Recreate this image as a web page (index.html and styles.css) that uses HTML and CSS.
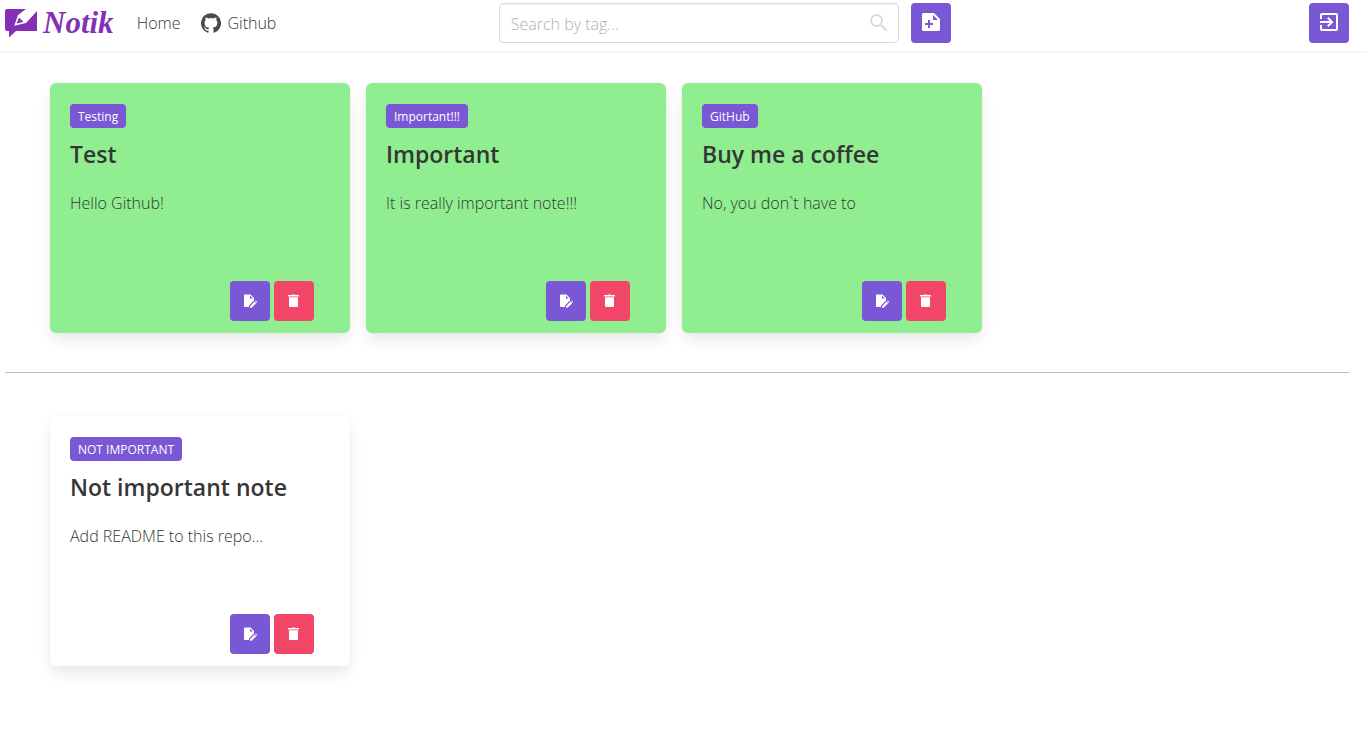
FILE: index.html
```html
<!DOCTYPE html>
<html lang="en">
<head>
<meta charset="utf-8">
<meta name="viewport" content="width=device-width, initial-scale=1">
<title>Notik</title>
<link rel="stylesheet" href="styles.css">
</head>
<body>
<svg class="sprite" aria-hidden="true">
  <symbol id="edit" viewBox="0 0 16 16"><path fill-rule="evenodd" d="M3 1.500h5.500L12 5v2.500L7 12.500V14H3a1 1 0 0 1-1-1V2.500a1 1 0 0 1 1-1zM8 2.700v2.800h2.800z"/><path d="m8 13.200 4.600-4.600 1.600 1.600-4.600 4.600H8zM13.100 8.100l.4-.4q.3-.3.6 0l1 1q.3.300 0 .6l-.4.4z"/></symbol>
  <symbol id="trash" viewBox="0 0 16 16"><path d="M2 2h3.700l.7-.5h2.200l.7.500H13v1.500H2zM3 4.300h9v8.700q0 1-1 1H4q-1 0-1-1z"/></symbol>
</svg>
<header class="navbar">
  <div class="nav-start">
    <a class="brand" href="#" aria-label="Notik">
      <svg class="brand-mark" viewBox="0 0 33 29" aria-hidden="true"><path d="M2 0h19L13 6 9.300 16.700 21 14 32 2v20H11L4 28.500V22H2q-2 0-2-2V2q0-2 2-2z"/><path d="m11.500 14.500 2.500-6 4.500 4.500z"/></svg>
      <span class="brand-name">Notik</span>
    </a>
    <nav class="links">
      <a class="link" href="#">Home</a>
      <a class="link" href="#"><svg class="github" viewBox="0 0 24 24" aria-hidden="true"><path d="M12 .3a12 12 0 0 0-3.800 23.400c.6.100.8-.3.800-.6v-2c-3.300.7-4-1.600-4-1.600-.6-1.400-1.400-1.800-1.400-1.800-1-.7.100-.7.100-.7 1.200 0 1.900 1.200 1.900 1.200 1 1.800 2.800 1.300 3.500 1 0-.8.400-1.300.7-1.600-2.700-.3-5.500-1.300-5.500-6 0-1.200.5-2.300 1.300-3.100-.2-.4-.6-1.600 0-3.200 0 0 1-.3 3.400 1.200a11.500 11.500 0 0 1 6 0c2.300-1.500 3.300-1.200 3.300-1.200.6 1.600.2 2.800 0 3.200.9.800 1.300 1.900 1.300 3.200 0 4.600-2.800 5.600-5.500 5.900.5.400.9 1 .9 2.200v3.300c0 .3.100.7.800.6A12 12 0 0 0 12 .3"/></svg>Github</a>
    </nav>
  </div>
  <div class="tools">
    <label class="search">
      <input class="search-input" type="text" placeholder="Search by tag..." aria-label="Search by tag">
      <svg class="search-icon" viewBox="0 0 24 24" aria-hidden="true"><path d="M9.500 3A6.500 6.500 0 0 1 16 9.500c0 1.610-.59 3.090-1.560 4.230l.27.270h.790l5 5-1.500 1.500-5-5v-.79l-.27-.27A6.516 6.516 0 0 1 9.500 16a6.500 6.500 0 0 1 0-13m0 2a4.500 4.500 0 1 0 0 9 4.500 4.500 0 0 0 0-9z"/></svg>
    </label>
    <button class="button" type="button" aria-label="Add note"><svg class="icon" viewBox="0 0 24 24"><path fill-rule="evenodd" d="M4.500 2H15l6 6v10.500q0 1.500-1.500 1.500h-15Q3 20 3 18.500v-15Q3 2 4.500 2zM14 4v5h5zM9 9v3H6v2h3v3h2v-3h3v-2h-3V9z"/></svg></button>
  </div>
  <div class="nav-end">
    <button class="button" type="button" aria-label="Log out"><svg class="icon" viewBox="0 0 24 24"><path d="M19 2H5a2 2 0 0 0-2 2v4h2V4h14v14H5v-4H3v4a2 2 0 0 0 2 2h14a2 2 0 0 0 2-2V4a2 2 0 0 0-2-2m-8.920 12.580L11.500 16l5-5-5-5-1.420 1.410L12.670 10H3v2h9.670z"/></svg></button>
  </div>
</header>
<main>
  <section class="notes" aria-label="Important notes">
    <article class="card pinned">
      <span class="tag">Testing</span>
      <h2 class="title">Test</h2>
      <p class="text">Hello Github!</p>
      <div class="actions"><button class="button" type="button" aria-label="Edit"><svg class="icon-small"><use href="#edit"/></svg></button><button class="button danger" type="button" aria-label="Delete"><svg class="icon-small"><use href="#trash"/></svg></button></div>
    </article>
    <article class="card pinned">
      <span class="tag">Important!!!</span>
      <h2 class="title">Important</h2>
      <p class="text">It is really important note!!!</p>
      <div class="actions"><button class="button" type="button" aria-label="Edit"><svg class="icon-small"><use href="#edit"/></svg></button><button class="button danger" type="button" aria-label="Delete"><svg class="icon-small"><use href="#trash"/></svg></button></div>
    </article>
    <article class="card pinned">
      <span class="tag">GitHub</span>
      <h2 class="title">Buy me a coffee</h2>
      <p class="text">No, you don`t have to</p>
      <div class="actions"><button class="button" type="button" aria-label="Edit"><svg class="icon-small"><use href="#edit"/></svg></button><button class="button danger" type="button" aria-label="Delete"><svg class="icon-small"><use href="#trash"/></svg></button></div>
    </article>
  </section>
  <hr class="divider">
  <section class="notes" aria-label="Other notes">
    <article class="card">
      <span class="tag">NOT IMPORTANT</span>
      <h2 class="title">Not important note</h2>
      <p class="text">Add README to this repo...</p>
      <div class="actions"><button class="button" type="button" aria-label="Edit"><svg class="icon-small"><use href="#edit"/></svg></button><button class="button danger" type="button" aria-label="Delete"><svg class="icon-small"><use href="#trash"/></svg></button></div>
    </article>
  </section>
</main>
</body>
</html>
```
FILE: styles.css
```css
* { box-sizing: border-box; }
body {
  margin: 0;
  background: #fff;
  color: #4a4a4a;
  font: 300 16px/24px "Segoe UI", "Open Sans", "Noto Sans", sans-serif;
}
.sprite { display: none; }
.navbar {
  display: grid;
  grid-template-columns: 31fr auto 25fr;
  align-items: start;
  min-height: 53px;
  padding: 3px 18px 0 5px;
  border-bottom: 2px solid #f5f5f5;
}
.nav-start { display: flex; align-items: center; height: 40px; }
.brand { display: flex; align-items: center; gap: 5px; color: #8430b5; text-decoration: none; }
.brand-mark { width: 33px; height: 29px; fill: currentColor; }
.brand-name { font: italic 700 31px/40px "Liberation Serif", serif; }
.links { display: flex; gap: 21px; margin-left: 23px; }
.link { display: flex; align-items: center; gap: 6px; color: #363636; text-decoration: none; }
.github { width: 20px; height: 20px; fill: #4a4a4a; }
.tools { display: flex; gap: 12px; }
.search { position: relative; width: 400px; }
.search-input {
  width: 100%;
  height: 40px;
  padding: 2px 40px 0 11px;
  border: 1px solid #dbdbdb;
  border-radius: 4px;
  box-shadow: inset 0 1px 2px rgba(10, 10, 10, .05);
  color: #363636;
  font: inherit;
}
.search-input::placeholder { color: #b0b0b0; opacity: 1; }
.search-icon { position: absolute; top: 8px; right: 8px; width: 24px; height: 24px; fill: #dbdbdb; }
.nav-end { display: flex; justify-content: flex-end; }
.button {
  display: flex;
  align-items: center;
  justify-content: center;
  width: 40px;
  height: 40px;
  padding: 0;
  border: 0;
  border-radius: 4px;
  background: #7957d5;
  color: #fff;
  cursor: pointer;
}
.danger { background: #f14668; }
.icon { width: 24px; height: 24px; fill: currentColor; }
.icon-small { width: 16px; height: 16px; fill: currentColor; }
.notes { display: flex; flex-wrap: wrap; gap: 16px; padding: 30px 50px 39px; }
.card {
  display: flex;
  flex-direction: column;
  align-items: flex-start;
  width: 300px;
  min-height: 250px;
  padding: 21px 36px 12px 20px;
  border-radius: 6px;
  box-shadow: 0 8px 16px -2px rgba(10, 10, 10, .1), 0 0 0 1px rgba(10, 10, 10, .02);
}
.pinned { background: #90ee90; }
.tag {
  height: 24px;
  padding: 0 8px;
  border-radius: 4px;
  background: #7957d5;
  color: #fff;
  font-size: 12px;
  font-weight: 400;
  line-height: 25px;
}
.title { margin: 12px 0 0; color: #363636; font-size: 23px; font-weight: 600; line-height: 28px; }
.text { margin: 23px 0 0; color: #363636; }
.actions { display: flex; gap: 4px; margin-top: auto; align-self: flex-end; }
.divider { height: 1px; margin: 0 18px 13px 5px; border: 0; background: #bcbcbc; }
```
